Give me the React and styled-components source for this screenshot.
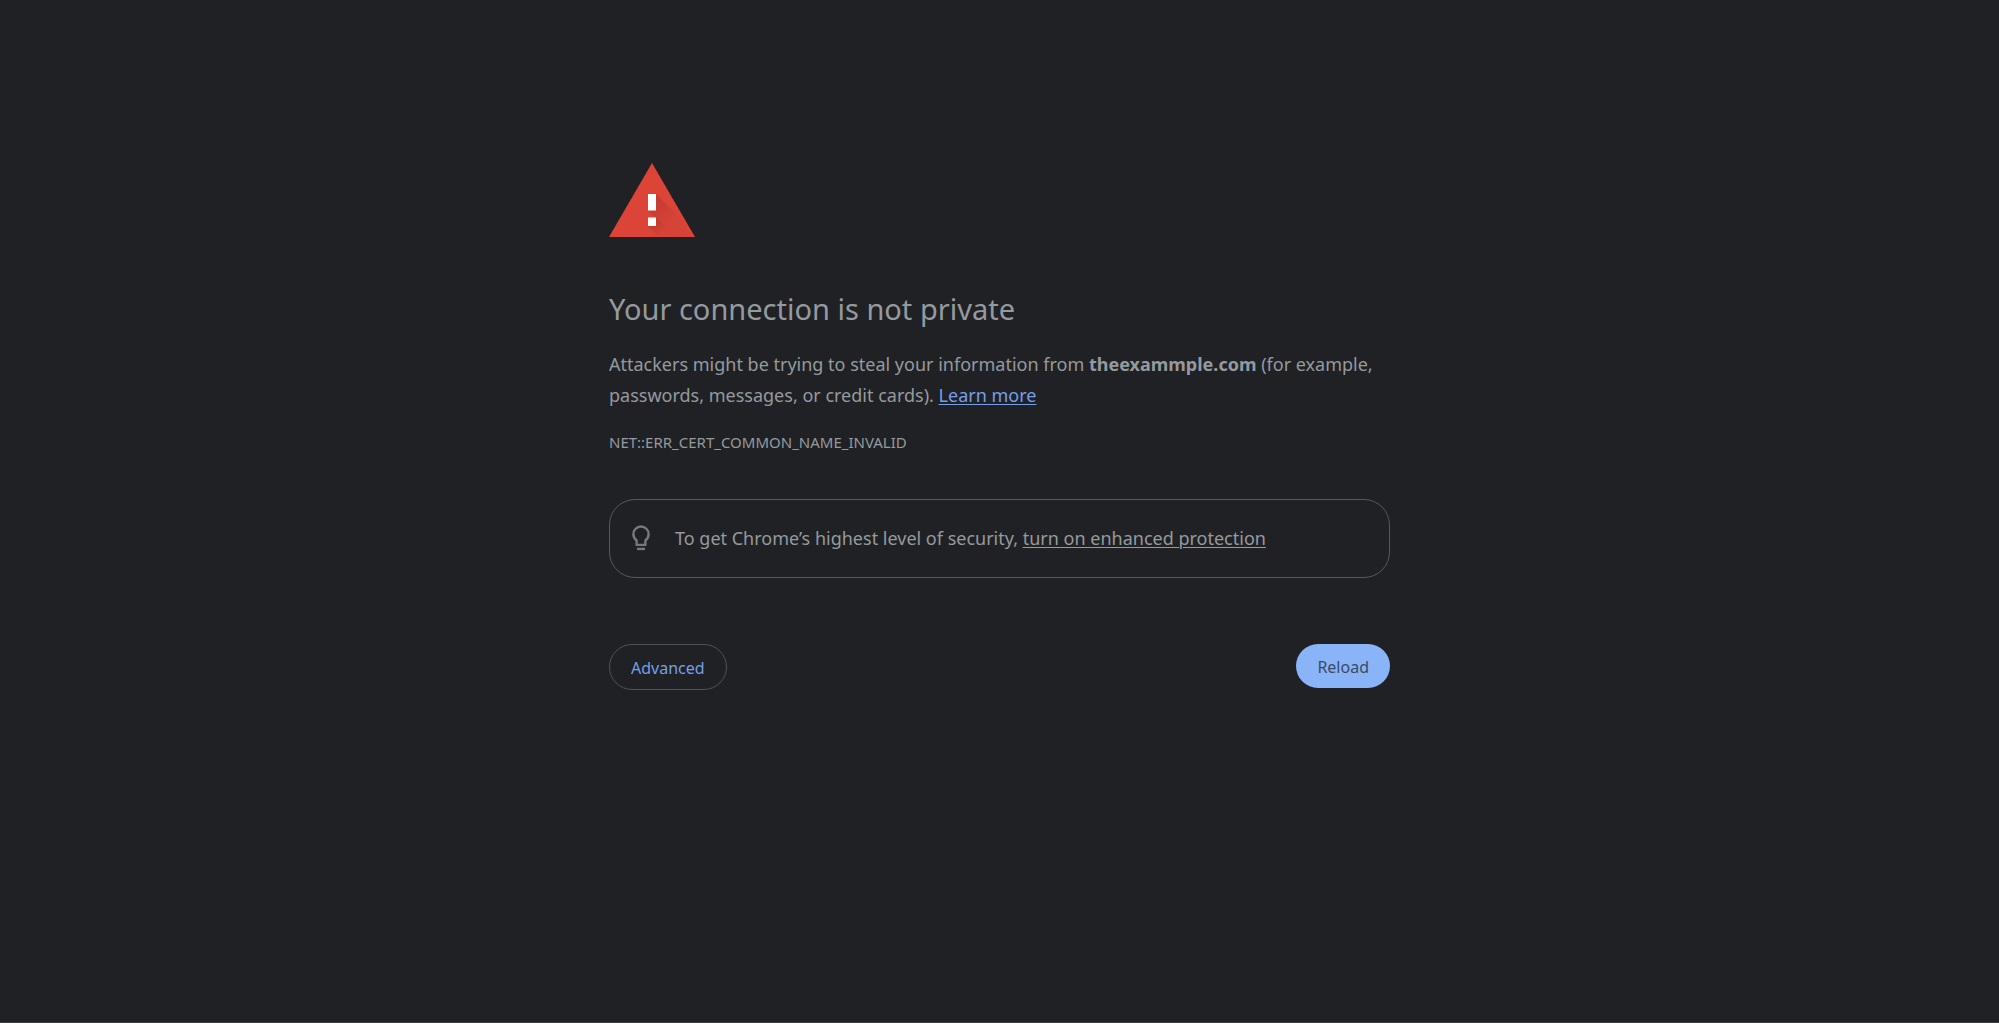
import React from "react";
import styled, { createGlobalStyle } from "styled-components";

const GlobalStyle = createGlobalStyle`
  * {
    box-sizing: border-box;
  }

  body {
    margin: 0;
    background-color: #202124;
    color: #949a9f;
    font-family: "Noto Sans", "Open Sans", sans-serif;
    font-size: 18px;
    line-height: 31px;
  }
`;

const Page = styled.div`
  display: flex;
  justify-content: center;
  min-height: 100vh;
  padding: 163px 24px 40px;
  border-bottom: 1px solid #3f3a40; /* thin line along the bottom of the window */
`;

const Interstitial = styled.main`
  width: 100%;
  max-width: 781px;
`;

const WarningIcon = styled.svg`
  display: block;
  width: 86px;
  height: 74px;
`;

const Title = styled.h1`
  margin: 51px 0 19px;
  font-size: 29px;
  font-weight: 400;
  line-height: 42px;
`;

const Message = styled.p`
  margin: 0;
`;

const Link = styled.a`
  color: ${(props) => props.$color || "inherit"};
  text-decoration: underline;
  text-decoration-thickness: 1px;
  text-underline-offset: 2px;
`;

const ErrorCode = styled.div`
  margin-top: 20px;
  font-size: 15px;
  line-height: 22px;
`;

const Promo = styled.div`
  display: flex;
  align-items: center;
  gap: 19px;
  min-height: 79px;
  margin-top: 46px;
  padding: 16px;
  border: 1px solid #55585c;
  border-radius: 26px;
`;

const BulbIcon = styled.svg`
  flex: none;
  width: 30px;
  height: 30px;
`;

const ButtonRow = styled.div`
  display: flex;
  justify-content: space-between;
  align-items: flex-start;
  margin-top: 66px;
`;

const Button = styled.button`
  height: ${(props) => (props.$primary ? "44px" : "46px")};
  padding: 2px 21px 0;
  border: ${(props) => (props.$primary ? "none" : "1px solid #505256")};
  border-radius: 23px;
  background-color: ${(props) => (props.$primary ? "#8ab4f8" : "transparent")};
  color: ${(props) => (props.$primary ? "#3c4a64" : "#769fe8")};
  font-family: inherit;
  font-size: 16px;
  cursor: pointer;
`;

export default function App() {
  return (
    <>
      <GlobalStyle />
      <Page>
        <Interstitial>
          <WarningIcon viewBox="0 0 86 74" aria-hidden="true">
            <defs>
              <linearGradient id="shade" gradientUnits="userSpaceOnUse" x1="42" y1="38" x2="62" y2="58">
                <stop offset="0" stopColor="#000" stopOpacity="0.12" />
                <stop offset="1" stopColor="#000" stopOpacity="0.02" />
              </linearGradient>
              <linearGradient id="shadeDot" gradientUnits="userSpaceOnUse" x1="42" y1="58" x2="54" y2="70">
                <stop offset="0" stopColor="#000" stopOpacity="0.14" />
                <stop offset="1" stopColor="#000" stopOpacity="0.02" />
              </linearGradient>
            </defs>
            <path d="M43 0L86 74H0z" fill="#db4437" />
            <path d="M47 31L74 58L82 74H66L39 47.500z" fill="url(#shade)" />
            <path d="M47 54.500L66.500 74H50L39 63z" fill="url(#shadeDot)" />
            <path d="M39 31h8v16.500h-8zM39 54.500h8v8.500h-8z" fill="#fff" />
          </WarningIcon>
          <Title>Your connection is not private</Title>
          <Message>
            Attackers might be trying to steal your information from <strong>theexammple.com</strong> (for
            example, passwords, messages, or credit cards).{" "}
            <Link href="#" $color="#769fe8">Learn more</Link>
          </Message>
          <ErrorCode>NET::ERR_CERT_COMMON_NAME_INVALID</ErrorCode>
          <Promo>
            <BulbIcon viewBox="0 0 24 24" aria-hidden="true">
              <path
                d="M12 2a6.100 6.100 0 0 0-6.100 6.100c0 2.400 1.200 3.900 2.600 5.100V16.700h7v-3.500c1.400-1.200 2.600-2.700 2.600-5.100A6.100 6.100 0 0 0 12 2z"
                fill="none"
                stroke="#77797c"
                strokeWidth="1.900"
                strokeLinejoin="round"
              />
              <path d="M8.800 19h6.400v1.900H8.800z" fill="#77797c" />
            </BulbIcon>
            <Message>
              To get Chrome’s highest level of security, <Link href="#">turn on enhanced protection</Link>
            </Message>
          </Promo>
          <ButtonRow>
            <Button type="button">Advanced</Button>
            <Button type="button" $primary>Reload</Button>
          </ButtonRow>
        </Interstitial>
      </Page>
    </>
  );
}
